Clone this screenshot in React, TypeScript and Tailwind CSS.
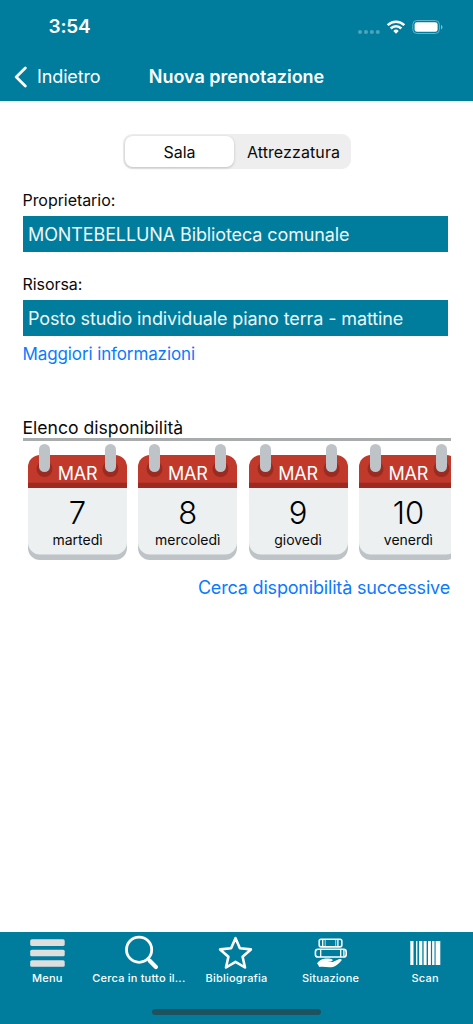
import React from "react";

const days = [
  { month: "MAR", day: "7", name: "martedì" },
  { month: "MAR", day: "8", name: "mercoledì" },
  { month: "MAR", day: "9", name: "giovedì" },
  { month: "MAR", day: "10", name: "venerdì" },
];

const StatusIcons = () => (
  <svg className="h-[18px] w-[86px]" viewBox="357 18 86 18" fill="none">
    <g fill="#4da4bb">
      <circle cx="360" cy="32" r="2" />
      <circle cx="366" cy="32" r="2" />
      <circle cx="371.9" cy="32" r="2" />
      <circle cx="377.8" cy="32" r="2" />
    </g>
    {/* wifi */}
    <g stroke="#fff" strokeWidth="2.6">
      <path d="M387.7 25.1a11.8 11.8 0 0 1 16.6 0" />
      <path d="M390.7 28.5a7.5 7.5 0 0 1 10.6 0" />
    </g>
    <path d="M396 33.7l-2.7-2.8a3.9 3.9 0 0 1 5.4 0z" fill="#fff" />
    {/* battery */}
    <rect x="412.8" y="20.5" width="26.6" height="13" rx="4" stroke="#66b1c4" />
    <rect x="414.6" y="22.2" width="23" height="9.6" rx="2.4" fill="#fff" />
    <path d="M441 25v4.4c.9-.4 1.5-1.2 1.5-2.2s-.6-1.8-1.5-2.2z" fill="#80bece" />
  </svg>
);

const MenuIcon = () => (
  <svg className="h-[40px] w-[48px]" viewBox="23.3 932 48 40" fill="#dedede">
    <rect x="30.5" y="939.3" width="34.5" height="6.6" rx="1.6" />
    <rect x="30.5" y="949.7" width="34.5" height="6.6" rx="1.6" />
    <rect x="30.5" y="960.2" width="34.5" height="6.6" rx="1.6" />
  </svg>
);

const SearchIcon = () => (
  <svg className="h-[40px] w-[48px]" viewBox="117.9 932 48 40" fill="none" stroke="#fff">
    <circle cx="139" cy="949.7" r="12.6" strokeWidth="2.8" />
    <path d="M147.5 958.5l3 2.8" strokeWidth="2.6" />
    <path d="M149.600 960.700l6.200 6.200" strokeWidth="4.2" strokeLinecap="round" />
  </svg>
);

const StarIcon = () => (
  <svg className="h-[40px] w-[48px]" viewBox="212.5 932 48 40" fill="none" stroke="#fff" strokeWidth="2.6" strokeLinejoin="round">
    <path d="M236 938.2l4.4 10.1 11 1.1-8.3 7.3 2.4 10.8-9.5-5.7-9.5 5.7 2.4-10.8-8.3-7.3 11-1.1z" />
  </svg>
);

const BooksIcon = () => (
  <svg className="h-[40px] w-[48px]" viewBox="307.1 932 48 40" fill="none" stroke="#fff" strokeWidth="1.600">
    <rect x="319.300" y="939.300" width="22.600" height="7.600" rx="1.800" />
    <path d="M322.800 939v8M338 939v8" strokeWidth="1.300" />
    <path d="M325.300 940v6.500M335.800 940v6.500" strokeWidth="0.700" />
    <rect x="315.500" y="949.300" width="30.800" height="7.700" rx="2.600" />
    <path d="M320.800 949v8M340.800 949v8M344 949.500v7" strokeWidth="1.300" />
    <path
      d="M317.200 963.200c2-2.400 4-4.200 7-4.500 4-.3 7.200 0 8.300.9.800.900-.2 1.800-1.800 1.900l-3.200.3 5.300.3 6.600-3c1.900-.700 3 .5 2 1.700-2.400 2.700-5 5.500-8.300 6.100-4.500.700-8.500-.400-13.600.100z"
      fill="#fff"
      stroke="none"
    />
  </svg>
);

const BarcodeIcon = () => (
  <svg className="h-[40px] w-[48px]" viewBox="401.7 932 48 40" fill="#fff">
    <rect x="410" y="941" width="3.200" height="24" />
    <rect x="415.800" y="941" width="1.300" height="24" />
    <rect x="418.800" y="941" width="3.200" height="24" />
    <rect x="423.300" y="941" width="3" height="24" />
    <rect x="427.700" y="941" width="2.900" height="24" />
    <rect x="431.800" y="941" width="2.400" height="24" />
    <rect x="435.300" y="941" width="4.700" height="24" />
  </svg>
);

const tabs = [
  { label: "Menu", Icon: MenuIcon, labelClass: "" },
  { label: "Cerca in tutto il...", Icon: SearchIcon, labelClass: "mr-[6px]" },
  { label: "Bibliografia", Icon: StarIcon, labelClass: "" },
  { label: "Situazione", Icon: BooksIcon, labelClass: "mr-[1px]" },
  { label: "Scan", Icon: BarcodeIcon, labelClass: "mr-[1px]" },
];

const CalendarShape = () => (
  <svg className="absolute inset-0 h-full w-full" viewBox="0 0 99 116">
    <path d="M0 90h99v14a12 12 0 0 1-12 12H12a12 12 0 0 1-12-12z" fill="#bdc3c7" />
    <path d="M0 40h99v58.500a12 12 0 0 1-12 12H12a12 12 0 0 1-12-12z" fill="#ecf0f1" />
    <path d="M12 11h75a12 12 0 0 1 12 12v21H0V23a12 12 0 0 1 12-12z" fill="#c0392b" />
    <path d="M0 38.800h99v5.200H0z" fill="#9b2b20" />
    <circle cx="16.500" cy="25" r="8" fill="#9b2b20" />
    <circle cx="82.500" cy="25" r="8" fill="#9b2b20" />
    <rect x="11" y="0" width="11" height="28" rx="5.500" fill="#bdc3c7" />
    <rect x="77" y="0" width="11" height="28" rx="5.500" fill="#bdc3c7" />
  </svg>
);

const Field = ({ label, children }: { label: string; children: React.ReactNode }) => (
  <div>
    <div className="h-8 text-[16px] leading-8 tracking-[-0.060px]">{label}</div>
    <div className="h-9 w-[425px] bg-[#007d9d] px-[5.500px] text-[18px] leading-[37px] tracking-[-0.110px] text-[#edf6f8]">
      {children}
    </div>
  </div>
);

export default function App() {
  return (
    <div className="flex h-[1024px] w-[473px] flex-col overflow-hidden bg-white font-['Inter','Liberation_Sans',sans-serif] whitespace-nowrap text-[#0a0a0a]">
      <header className="h-[101px] shrink-0 bg-[#007d9d] text-white">
        <div className="flex h-[54px] items-center justify-between pr-[30px] pl-[48.500px]">
          <span className="pt-px text-[19px] font-semibold tracking-[-0.200px]">3:54</span>
          <StatusIcons />
        </div>
        <div className="grid h-[45px] grid-cols-[1fr_auto_1fr] items-center">
          <div className="flex items-center gap-[10px] pl-[14px]">
            <svg className="h-[22px] w-[13px]" viewBox="0 0 13 22" fill="none" stroke="#fff" strokeWidth="2.800" strokeLinecap="round" strokeLinejoin="round">
              <path d="M11.300 2L2.200 11l9.100 9" />
            </svg>
            <span className="text-[18px] tracking-[-0.120px]">Indietro</span>
          </div>
          <h1 className="text-[18px] font-semibold">Nuova prenotazione</h1>
          <div />
        </div>
      </header>

      <main className="flex grow flex-col pl-[22.500px]">
        <div className="mt-[33px] ml-[100.500px] flex h-[35px] w-[228px] rounded-[9px] bg-[#eeeeee] p-[2px] text-[16px]">
          <button className="w-[109px] rounded-[8px] bg-white shadow-[0_1px_3px_rgba(0,0,0,0.2)]">Sala</button>
          <button className="grow pl-[4px] tracking-[0.100px]">Attrezzatura</button>
        </div>

        <div className="mt-[15px] flex flex-col gap-4">
          <Field label="Proprietario:">MONTEBELLUNA Biblioteca comunale</Field>
          <Field label="Risorsa:">Posto studio individuale piano terra - mattine</Field>
        </div>
        <a className="h-9 text-[17px] leading-[37px] tracking-[-0.110px] text-[#0a7aff]">Maggiori informazioni</a>

        <section className="mt-[43px] w-[428.500px]">
          <h2 className="h-[26px] border-b-[3px] border-[#a9acac] text-[17.600px] leading-[25px]">Elenco disponibilità</h2>
          <div className="mt-[3px] flex gap-[11.300px] overflow-hidden pl-[5.500px]">
            {days.map((d) => (
              <div key={d.day} className="relative flex h-[116px] w-[99px] shrink-0 flex-col items-center">
                <CalendarShape />
                <span className="relative mt-[19px] text-[18px] leading-[22px] tracking-[-0.200px] text-white">{d.month}</span>
                <span className="relative mt-[8px] text-[31px] leading-[40px] font-light text-black">{d.day}</span>
                <span className="relative -mt-px text-[14px] leading-[16px]">{d.name}</span>
              </div>
            ))}
          </div>
          <a className="mt-[10px] block pr-[1px] text-right text-[18px] leading-[35px] tracking-[-0.180px] text-[#0a7aff]">
            Cerca disponibilità successive
          </a>
        </section>
      </main>

      <footer className="h-[92px] shrink-0 bg-[#007d9d]">
        <nav className="grid grid-cols-5">
          {tabs.map(({ label, Icon, labelClass }) => (
            <div key={label} className="flex flex-col items-center text-white">
              <Icon />
              <span className={`text-[11px] leading-[12px] font-medium tracking-[0.200px] ${labelClass}`}>{label}</span>
            </div>
          ))}
        </nav>
        <div className="mx-auto mt-[25px] h-[5.500px] w-[169px] rounded-full bg-[#1f5260]" />
      </footer>
    </div>
  );
}
